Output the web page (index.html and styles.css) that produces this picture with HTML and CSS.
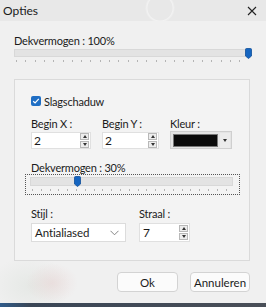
FILE: index.html
```html
<!DOCTYPE html>
<html>
<head>
<meta charset="utf-8">
<link rel="stylesheet" href="styles.css">
</head>
<body>
<div class="win">
  <div class="titlebar">
    <span class="title">Opties</span>
    <svg class="close" width="10" height="10" viewBox="0 0 10 10"><path d="M1 1L9 9M9 1L1 9" stroke="#222" stroke-width="1.1" fill="none"/></svg>
  </div>
  <div class="main">
    <div class="lbl">Dekvermogen : 100%</div>
    <div class="slider top">
      <div class="track"></div>
      <svg class="thumb" style="left:231px" width="7" height="11" viewBox="0 0 7 11"><path d="M0.5 1.5Q0.5 0.5 1.5 0.5H5.5Q6.5 0.5 6.5 1.5V8L3.5 10.5L0.5 8Z" fill="#1565c0" stroke="#0f4f99" stroke-width="0.8"/></svg>
      <div class="ticks"></div>
    </div>
    <div class="group">
      <div class="check"><span class="cb"><svg width="8" height="8" viewBox="0 0 8 8"><path d="M1.2 4.2L3.1 6L6.8 1.8" stroke="#fff" stroke-width="1.2" fill="none"/></svg></span><span>Slagschaduw</span></div>
      <div class="row3">
        <div class="field fx">
          <div class="lbl">Begin X :</div>
          <div class="spin"><span class="val">2</span><span class="btns"><span class="sb"><i class="up"></i></span><span class="sb"><i class="dn"></i></span></span></div>
        </div>
        <div class="field fy">
          <div class="lbl">Begin Y :</div>
          <div class="spin"><span class="val">2</span><span class="btns"><span class="sb"><i class="up"></i></span><span class="sb"><i class="dn"></i></span></span></div>
        </div>
        <div class="field fk">
          <div class="lbl">Kleur :</div>
          <div class="colorcombo"><span class="swatch"></span><span class="drop"><i class="dn"></i></span></div>
        </div>
      </div>
      <div class="lbl lbl2">Dekvermogen : 30%</div>
      <div class="slider focus">
        <div class="track"></div>
        <svg class="thumb" style="left:48px" width="7" height="11" viewBox="0 0 7 11"><path d="M0.5 1.5Q0.5 0.5 1.5 0.5H5.5Q6.5 0.5 6.5 1.5V8L3.5 10.5L0.5 8Z" fill="#1565c0" stroke="#0f4f99" stroke-width="0.8"/></svg>
        <div class="ticks"></div>
      </div>
      <div class="row2">
        <div class="field fs">
          <div class="lbl">Stijl :</div>
          <div class="combo"><span>Antialiased</span><svg width="9" height="6" viewBox="0 0 9 6"><path d="M0.5 0.8L4.5 4.8L8.5 0.8" stroke="#777" stroke-width="0.9" fill="none"/></svg></div>
        </div>
        <div class="field fr">
          <div class="lbl">Straal :</div>
          <div class="spin"><span class="val">7</span><span class="btns"><span class="sb"><i class="up"></i></span><span class="sb"><i class="dn"></i></span></span></div>
        </div>
      </div>
    </div>
    <div class="buttons">
      <button class="btn ok">Ok</button>
      <button class="btn cancel">Annuleren</button>
    </div>
  </div>
  <div class="taskbar"></div>
</div>
</body>
</html>
```

FILE: styles.css
```css
* { box-sizing: border-box; }
html, body { margin: 0; padding: 0; }
body {
  width: 266px;
  height: 307px;
  overflow: hidden;
  font-family: Lato, "Noto Sans", sans-serif;
  font-size: 11px;
  letter-spacing: -0.2px;
  color: #1b1b1b;
}
.win {
  width: 266px;
  height: 307px;
  display: flex;
  flex-direction: column;
  background: #efefef;
}
.titlebar {
  height: 21px;
  flex: none;
  display: flex;
  align-items: center;
  justify-content: space-between;
  padding: 0 9px 0 3px;
  background:
    radial-gradient(circle at 160px 8px, rgba(255,255,255,0) 12px, rgba(255,255,255,0.45) 13px, rgba(255,255,255,0) 15px),
    #e8e8e8;
}
.title { font-size: 12px; line-height: 21px; color: #1a1a1a; letter-spacing: 0; }
.close { display: block; }
.main {
  flex: 1;
  padding: 13px 15px 0 14px;
  display: flex;
  flex-direction: column;
  background:
    radial-gradient(ellipse 26px 20px at 52px 262px, rgba(228,190,190,0.3), rgba(228,190,190,0) 100%),
    radial-gradient(ellipse 40px 30px at 30px 265px, rgba(205,215,205,0.3), rgba(205,215,205,0) 100%),
    #f0f0f0;
}
.lbl { line-height: 14px; height: 14px; white-space: nowrap; }
.slider { position: relative; }
.slider.top { height: 16px; margin-bottom: 15px; padding-top: 1px; }
.slider .track {
  height: 8px;
  background: #e3e3e3;
  border: 1px solid #d8d8d8;
}
.slider .thumb { position: absolute; top: 0; }
.slider .ticks {
  height: 2px;
  margin-top: 3px;
  background: repeating-linear-gradient(90deg, #b4b4b4 0 1px, transparent 1px 9.3px);
  margin-left: 2px;
  margin-right: 2px;
}
.group {
  border: 1px solid #dadada;
  background: #f3f3f3;
  width: 236px;
  padding: 14px 16px 18px 16px;
  display: flex;
  flex-direction: column;
}
.check { display: flex; align-items: center; height: 14px; gap: 3px; }
.cb {
  width: 10px; height: 10px;
  background: #1f6ec4;
  border-radius: 2px;
  display: flex; align-items: center; justify-content: center;
}
.cb svg { display: block; }
.row3 { display: flex; margin-top: 9px; height: 32px; }
.field { display: flex; flex-direction: column; }
.fx { width: 60px; margin-right: 11px; }
.fy { width: 57px; margin-right: 11px; }
.fk { width: 62px; }
.spin {
  margin-top: 1px;
  height: 17px;
  background: #fff;
  border: 1px solid #e0e0e0;
  display: flex;
  align-items: center;
  justify-content: space-between;
  padding: 0 0 0 2px;
}
.val { font-size: 12px; line-height: 15px; }
.btns { display: flex; flex-direction: column; gap: 1px; margin-right: 1px; }
.sb {
  width: 9px; height: 7px;
  background: #ededed;
  border: 1px solid #b8b8b8;
  display: flex; align-items: center; justify-content: center;
}
i.up, i.dn { display: block; width: 0; height: 0; border-left: 2.5px solid transparent; border-right: 2.5px solid transparent; }
i.up { border-bottom: 3px solid #333; }
i.dn { border-top: 3px solid #333; }
.colorcombo {
  height: 19px;
  background: #e4e4e4;
  border: 1px solid #cfcfcf;
  display: flex;
  align-items: center;
  padding: 0 1px 0 2px;
}
.swatch { width: 45px; height: 13px; background: #0b0b0b; border: 1px solid #777; }
.drop {
  flex: 1; height: 15px; margin-left: 2px;
  display: flex; align-items: center; justify-content: center;
  background: #ececec;
}
.lbl2 { margin-top: 12px; height: 13px; line-height: 13px; }
.slider.focus {
  margin: 0 -7px 0 -6px;
  height: 21px;
  border: 1px dotted #555;
  padding: 2px 6px 0 4px;
}
.slider.focus .track { height: 9px; }
.slider.focus .thumb { top: 1px; }
.slider.focus .ticks { margin-top: 3px; background: repeating-linear-gradient(90deg, #b4b4b4 0 1px, transparent 1px 8.8px); }
.row2 { display: flex; margin-top: 12px; }
.fs { width: 95px; margin-right: 13px; }
.fr { width: 51px; }
.row2 .lbl { height: 14px; }
.combo {
  margin-top: 2px;
  height: 19px;
  background: #fff;
  border: 1px solid #dcdcdc;
  display: flex; align-items: center; justify-content: space-between;
  padding: 0 6px 0 3px;
  font-size: 11.5px;
  letter-spacing: -0.1px;
}
.fr .spin { margin-top: 2px; height: 19px; }
.fr .val { padding-left: 1px; }
.buttons {
  display: flex;
  justify-content: flex-end;
  gap: 12px;
  margin-top: 11px;
  padding-right: 1px;
}
.btn {
  height: 20px;
  font-family: inherit;
  font-size: 11.5px;
  letter-spacing: 0;
  color: #1b1b1b;
  background: #fbfbfb;
  border: 1px solid #d3d3d3;
  border-radius: 4px;
  padding: 0;
}
.ok { width: 61px; }
.cancel { width: 60px; }
.taskbar {
  height: 4px;
  flex: none;
  background: linear-gradient(90deg, #2f5b8a 0, #3a4656 30px, #4a4f58 100%);
}
```
